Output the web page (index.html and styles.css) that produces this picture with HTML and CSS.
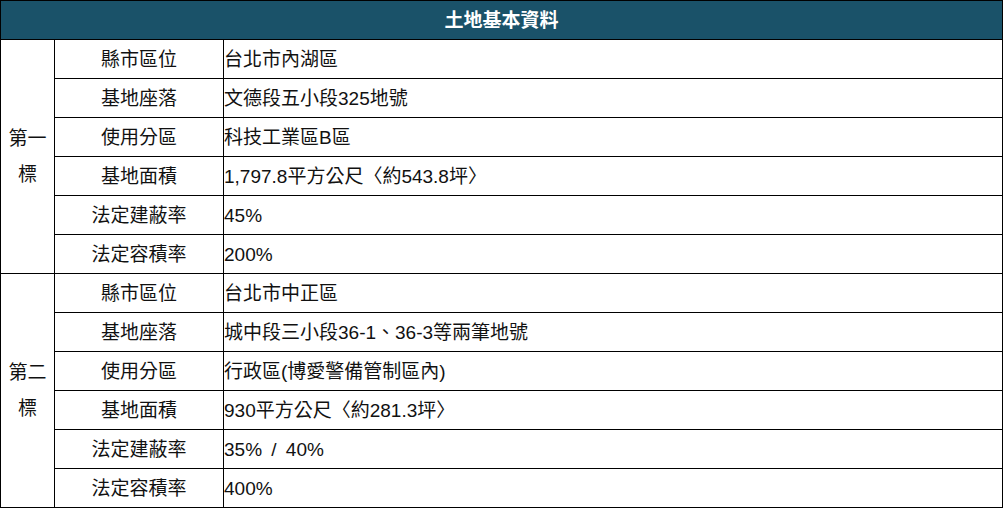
FILE: index.html
```html
<!DOCTYPE html>
<html lang="zh-Hant">
<head>
<meta charset="utf-8">
<title>土地基本資料</title>
<link rel="stylesheet" href="styles.css">
</head>
<body>
<table class="land">
  <colgroup>
    <col class="c-group">
    <col class="c-label">
    <col class="c-value">
  </colgroup>
  <thead>
    <tr><th colspan="3" class="title">土地基本資料</th></tr>
  </thead>
  <tbody>
    <tr>
      <td rowspan="6" class="group">第一標</td>
      <td class="label">縣市區位</td>
      <td class="value">台北市內湖區</td>
    </tr>
    <tr><td class="label">基地座落</td><td class="value">文德段五小段325地號</td></tr>
    <tr><td class="label">使用分區</td><td class="value">科技工業區B區</td></tr>
    <tr><td class="label">基地面積</td><td class="value">1,797.8平方公尺〈約543.8坪〉</td></tr>
    <tr><td class="label">法定建蔽率</td><td class="value">45%</td></tr>
    <tr><td class="label">法定容積率</td><td class="value">200%</td></tr>
    <tr>
      <td rowspan="6" class="group">第二標</td>
      <td class="label">縣市區位</td>
      <td class="value">台北市中正區</td>
    </tr>
    <tr><td class="label">基地座落</td><td class="value">城中段三小段36-1、36-3等兩筆地號</td></tr>
    <tr><td class="label">使用分區</td><td class="value">行政區(博愛警備管制區內)</td></tr>
    <tr><td class="label">基地面積</td><td class="value">930平方公尺〈約281.3坪〉</td></tr>
    <tr><td class="label">法定建蔽率</td><td class="value">35% <span class="slash">/</span> 40%</td></tr>
    <tr><td class="label">法定容積率</td><td class="value">400%</td></tr>
  </tbody>
</table>
</body>
</html>
```

FILE: styles.css
```css
html, body {
  margin: 0;
  padding: 0;
  background: #ffffff;
}

body {
  font-family: "Liberation Sans", "Noto Sans CJK TC", sans-serif;
  font-size: 19px;
  color: #111111;
}

.land {
  width: 1003px;
  border-collapse: collapse;
  table-layout: fixed;
}

.c-group { width: 54px; }
.c-label { width: 169px; }

.land th,
.land td {
  border: 1px solid #000000;
  padding: 0;
  height: 39px;
  box-sizing: border-box;
  line-height: 29px;
}

.title {
  background: #1a5269;
  color: #ffffff;
  font-weight: bold;
  text-align: center;
  height: 40px;
}

.land .group {
  text-align: center;
  vertical-align: middle;
  padding: 0 4px;
  line-height: 36px;
}

.label {
  text-align: center;
}

.value {
  text-align: left;
  padding-left: 3px;
}

.slash {
  padding: 0 4px;
}
```
